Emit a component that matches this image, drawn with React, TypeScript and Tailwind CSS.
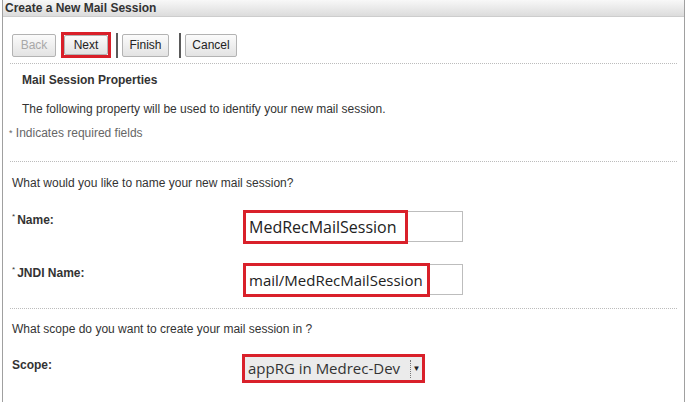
import React from "react";

const btn =
  "h-[23px] border border-[#b3b3b3] rounded-[2px] bg-gradient-to-b from-[#fbfbfb] to-[#e3e3e3] text-[12px] leading-none flex items-center justify-center";

function Field({ label, value, redWidth, size }: { label: string; value: string; redWidth: string; size: string }) {
  return (
    <div className="flex items-start">
      <div className="w-[240px] pl-[9px] pt-[2px] text-[12px] font-bold text-[#333]">
        <span className="text-[8px] align-top font-normal mr-[2px]">*</span>
        {label}
      </div>
      {/* input with review highlight laid over it */}
      <div className="relative mt-[2px] w-[220px] h-[31px] border border-[#bdbdbd] bg-white">
        <div
          className={`absolute -left-px -top-[2px] h-[34px] border-[3px] border-[#d9202a] flex items-center pl-[3px] font-['Open_Sans',sans-serif] text-[#222] whitespace-nowrap ${size} ${redWidth}`}
        >
          {value}
        </div>
      </div>
    </div>
  );
}

export default function App() {
  return (
    <div className="w-[687px] h-[402px] bg-white overflow-hidden font-['Liberation_Sans',Arial,sans-serif] text-[#333]">
      <div className="ml-[2px] w-[683px] h-full border-x border-[#a0a0a0]">
        {/* Title bar */}
        <div className="h-[17px] bg-gradient-to-b from-[#f8f8f8] to-[#dcdcdc] border-b border-[#cdcdcd] pl-[2px] text-[12px] font-bold leading-[16px] text-[#333]">
          Create a New Mail Session
        </div>

        {/* Train buttons */}
        <div className="flex items-center mt-[15px] pl-[9px] h-[26px]">
          <div className={`${btn} w-[44px] text-[#a8a8a8]`}>Back</div>
          <div className="ml-[5px] w-[50px] h-[26px] border-[3px] border-[#d9202a] flex">
            <div className={`${btn} w-full h-full text-[#222]`}>Next</div>
          </div>
          <div className="ml-[5px] w-[2px] h-[25px] bg-[#5a5a5a]" />
          <div className={`${btn} ml-[4px] w-[47px] text-[#222]`}>Finish</div>
          <div className="ml-[10px] w-[2px] h-[25px] bg-[#5a5a5a]" />
          <div className={`${btn} ml-[4px] w-[52px] text-[#222]`}>Cancel</div>
        </div>

        <div className="ml-[7px] w-[667px] mt-[5px] border-t border-dotted border-[#bcbcbc]" />

        {/* Properties header */}
        <div className="pl-[19px] mt-[9px] text-[12px] font-bold leading-[14px]">Mail Session Properties</div>
        <div className="pl-[19px] mt-[15px] text-[12px] leading-[14px] text-[#333]">
          The following property will be used to identify your new mail session.
        </div>
        <div className="pl-[6px] mt-[10px] text-[12px] leading-[14px] text-[#666]">
          <span className="text-[9px] align-top">*</span> Indicates required fields
        </div>

        <div className="ml-[7px] w-[667px] mt-[21px] border-t border-dotted border-[#bcbcbc]" />

        <div className="pl-[9px] mt-[14px] text-[12px] leading-[14px]">What would you like to name your new mail session?</div>

        <div className="mt-[19px]">
          <Field label="Name:" value="MedRecMailSession" redWidth="w-[165px]" size="text-[16px]" />
        </div>
        <div className="mt-[20px]">
          <Field label="JNDI Name:" value="mail/MedRecMailSession" redWidth="w-[187px]" size="text-[15px]" />
        </div>

        <div className="ml-[7px] w-[667px] mt-[13px] border-t border-dotted border-[#bcbcbc]" />

        <div className="pl-[9px] mt-[13px] text-[12px] leading-[14px]">What scope do you want to create your mail session in ?</div>

        <div className="flex items-start mt-[17px]">
          <div className="w-[239px] pl-[9px] pt-[3px] text-[12px] font-bold">Scope:</div>
          <div className="mt-[1px] w-[183px] h-[29px] border-[3px] border-[#d9202a] bg-[#ebebeb] flex items-center">
            <span className="pl-[3px] w-[165px] font-['Open_Sans',sans-serif] text-[15px] text-[#333] whitespace-nowrap overflow-hidden">
              appRG in Medrec-Dev
            </span>
            <span className="h-[18px] border-l border-dotted border-[#777]" />
            <span className="flex-1 text-center text-[8px] leading-none text-[#222]">▼</span>
          </div>
        </div>
      </div>
    </div>
  );
}
